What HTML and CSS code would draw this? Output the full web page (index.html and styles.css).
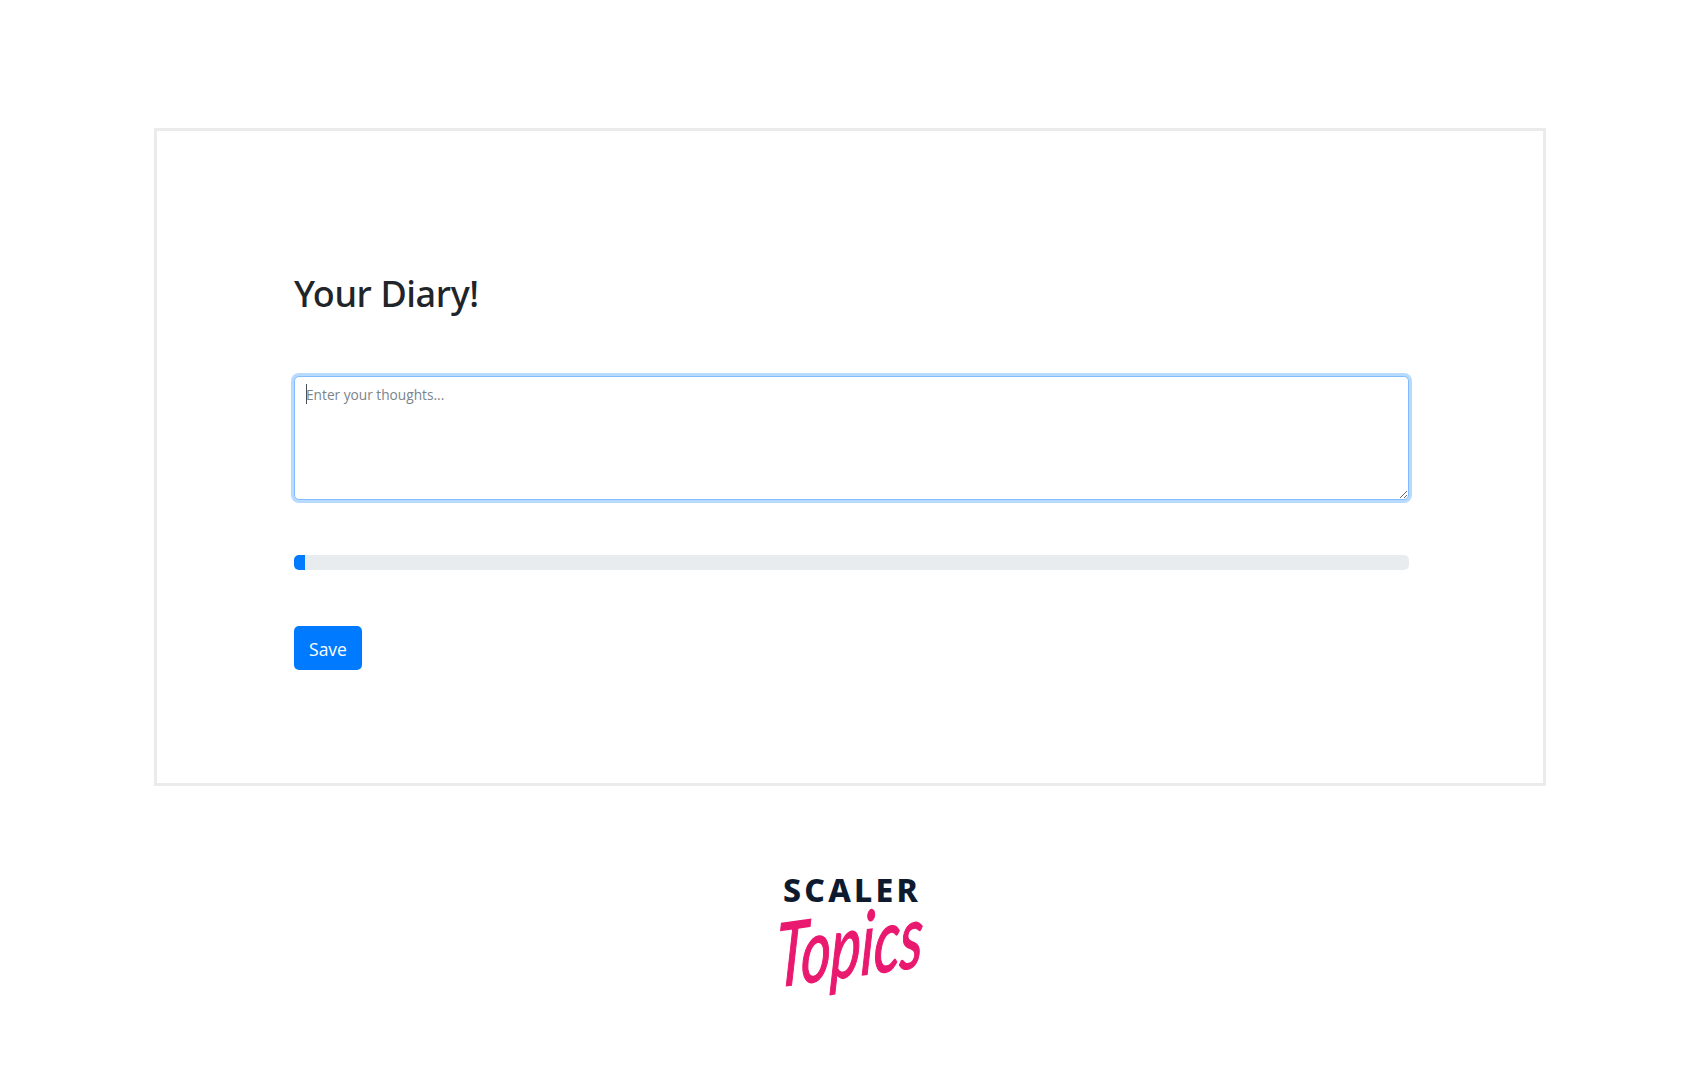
FILE: index.html
```html
<!DOCTYPE html>
<html lang="en">
<head>
    <meta charset="UTF-8">
    <meta name="viewport" content="width=device-width, initial-scale=1.0">
    <title>Your Diary!</title>
    <link rel="stylesheet" href="styles.css">
</head>
<body>
    <div class="container">
        <h1 class="title">Your Diary!</h1>
        <div class="input-wrap">
            <textarea class="diary-input" placeholder="Enter your thoughts..."></textarea>
            <span class="caret"></span>
        </div>
        <div class="progress">
            <div class="progress-bar" style="width: 1%"></div>
        </div>
        <button class="btn">Save</button>
    </div>

    <div class="logo">
        <div class="logo-top">SCALER</div>
        <div class="logo-script">Topics</div>
    </div>
</body>
</html>
```

FILE: styles.css
```css
* {
    margin: 0;
    padding: 0;
    box-sizing: border-box;
}

body {
    font-family: "Open Sans", "Noto Sans", sans-serif;
    background: #fff;
    color: #212529;
    padding-top: 128px;
}

.container {
    width: 1392px;
    height: 658px;
    margin: 0 auto;
    border: 3px solid #ebebeb;
    padding: 141px 134px 0 137px;
    display: flex;
    flex-direction: column;
}

.title {
    font-family: "Noto Sans", sans-serif;
    font-size: 36px;
    font-weight: 500;
    line-height: 44px;
    letter-spacing: -0.4px;
    margin-bottom: 60px;
}

.input-wrap {
    position: relative;
}

.diary-input {
    display: block;
    width: 100%;
    height: 124px;
    padding: 7px 11px;
    border: 1px solid #80bdff;
    border-radius: 5px;
    box-shadow: 0 0 0 3px #b8dafe;
    outline: none;
    font-family: inherit;
    font-size: 13.7px;
    line-height: 21px;
    color: #495057;
    resize: vertical;
}

.diary-input::placeholder {
    color: #7b848c;
}

.caret {
    position: absolute;
    top: 8px;
    left: 12px;
    width: 1px;
    height: 20px;
    background: #495057;
}

.progress {
    height: 15px;
    margin-top: 55px;
    background: #e9ecef;
    border-radius: 5px;
    overflow: hidden;
}

.progress-bar {
    height: 100%;
    background: #007bff;
}

.btn {
    align-self: flex-start;
    width: 68px;
    height: 44px;
    margin-top: 56px;
    padding-top: 2px;
    border: none;
    border-radius: 5px;
    background: #007bff;
    color: #fff;
    font-family: inherit;
    font-size: 17.5px;
}

.logo {
    width: 170px;
    margin: 88px auto 0;
    text-align: center;
}

.logo-top {
    font-family: "Noto Sans", sans-serif;
    font-size: 32px;
    font-weight: 800;
    line-height: 32px;
    letter-spacing: 3.2px;
    padding-left: 4px;
    color: #0e1b2f;
}

.logo-script {
    font-family: "Lato", sans-serif;
    font-style: italic;
    font-size: 60px;
    line-height: 110px;
    margin-top: -18px;
    color: #e9196f;
    -webkit-text-stroke: 1px #e9196f;
    transform: rotate(-8deg) skewX(-10deg) scale(0.96, 1.45);
}
```
